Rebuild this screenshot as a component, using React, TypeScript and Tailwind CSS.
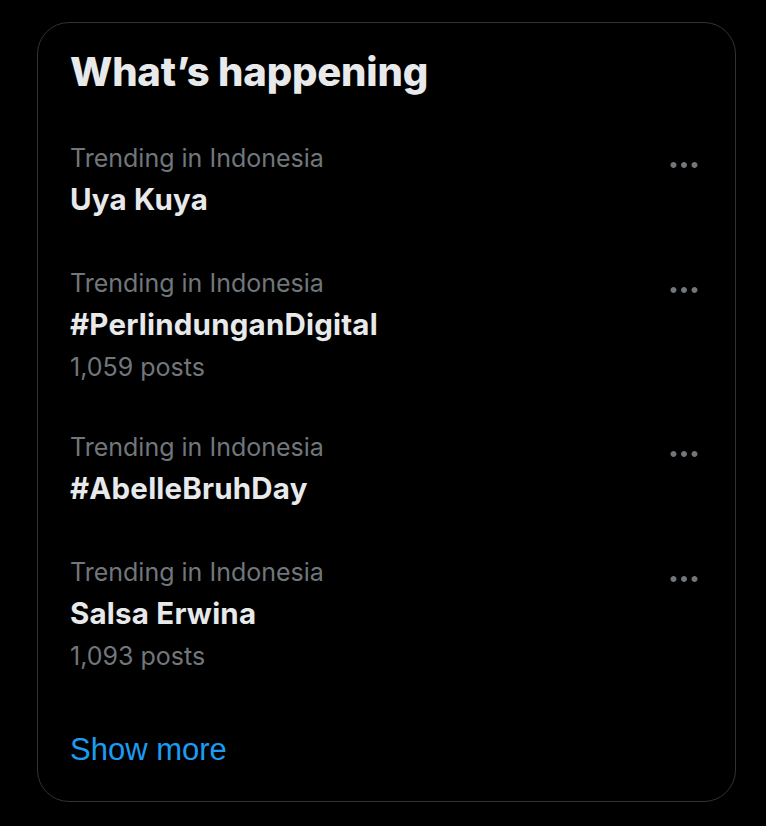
import React from 'react';

type Trend = {
  context: string;
  name: string;
  posts?: string;
};

const TRENDS: Trend[] = [
  { context: 'Trending in Indonesia', name: 'Uya Kuya' },
  { context: 'Trending in Indonesia', name: '#PerlindunganDigital', posts: '1,059 posts' },
  { context: 'Trending in Indonesia', name: '#AbelleBruhDay' },
  { context: 'Trending in Indonesia', name: 'Salsa Erwina', posts: '1,093 posts' },
];

function MoreIcon() {
  return (
    <svg viewBox="0 0 24 24" className="h-[36px] w-[36px] fill-[#71767b]" aria-hidden="true">
      <path d="M3 12c0-1.1.9-2 2-2s2 .9 2 2-.9 2-2 2-2-.9-2-2zm9 2c1.1 0 2-.9 2-2s-.9-2-2-2-2 .9-2 2 .9 2 2 2zm7 0c1.1 0 2-.9 2-2s-.9-2-2-2-2 .9-2 2 .9 2 2 2z" />
    </svg>
  );
}

export default function App() {
  return (
    <div className="min-h-[826px] w-full bg-black pl-[37px] pt-[22px] font-['Inter','Liberation_Sans',sans-serif]">
      <section className="w-[699px] rounded-[32px] border border-[#2f3336] bg-black">
        <h2 className="px-[32px] pb-[22px] pt-[25px] text-[40px] font-extrabold leading-[48px] tracking-[-0.2px] text-[#e7e9ea]">
          What’s happening
        </h2>

        {TRENDS.map((trend) => (
          <div key={trend.name} className="flex items-start justify-between px-[32px] py-[24px]">
            <div className="flex flex-col">
              <span className="text-[25px] leading-[32px] text-[#71767b]">{trend.context}</span>
              <span className="mt-[5px] text-[29.5px] font-bold leading-[40px] tracking-[0.2px] text-[#e7e9ea]">
                {trend.name}
              </span>
              {trend.posts && (
                <span className="mt-[7px] text-[25px] leading-[32px] text-[#71767b]">{trend.posts}</span>
              )}
            </div>
            <button type="button" className="mr-[1px] mt-[5px] flex items-center justify-center">
              <MoreIcon />
            </button>
          </div>
        ))}

        <div className="px-[32px] pb-[31px] pt-[34px]">
          <span className="font-['Liberation_Sans',Arial,sans-serif] text-[31px] leading-[40px] text-[#1d9bf0]">
            Show more
          </span>
        </div>
      </section>
    </div>
  );
}
